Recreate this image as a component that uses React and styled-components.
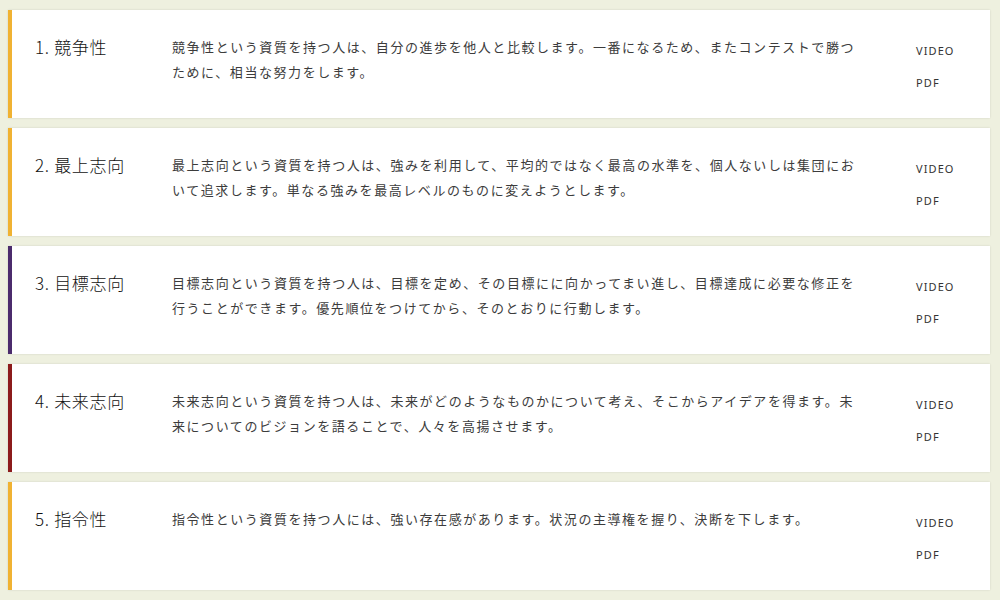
import React from 'react';
import styled, { createGlobalStyle } from 'styled-components';

const GlobalStyle = createGlobalStyle`
  html, body {
    margin: 0;
    padding: 0;
    background: #eef0df;
  }
  body {
    font-family: "Noto Sans CJK JP", "Noto Sans", sans-serif;
    color: #333;
  }
`

const List = styled.ul`
  list-style: none;
  margin: 0;
  padding: 10px 10px 10px 8px;
  display: flex;
  flex-direction: column;
  gap: 10px;
`

const Card = styled.li`
  display: grid;
  grid-template-columns: 137px 690px 1fr;
  box-sizing: border-box;
  height: 108px;
  padding: 24px 0 0 23px;
  background: #fff;
  border-left: 4px solid ${props => props.color};
  box-shadow: 0 0 2px rgba(0, 0, 0, 0.12);
`

const Title = styled.h3`
  margin: 0;
  font-size: 17px;
  font-weight: 300;
  line-height: 25px;
  letter-spacing: 0.04em;
  color: #111;
`

const Description = styled.p`
  margin: 0;
  font-size: 13px;
  font-weight: 400;
  line-height: 25px;
  letter-spacing: 0.12em;
  color: #3c3c3c;
`

const Links = styled.div`
  display: flex;
  flex-direction: column;
  padding-left: 54px;
  padding-top: 1px;
  a {
    font-family: "Noto Sans", sans-serif;
    font-size: 11px;
    font-weight: 400;
    line-height: 32px;
    letter-spacing: 0.1em;
    color: #333;
    text-decoration: none;
  }
`

const ORANGE = '#f0b232'
const PURPLE = '#4b2b6c'
const RED = '#8c1b1b'

const themes = [
  {
    title: '1. 競争性',
    color: ORANGE,
    text: '競争性という資質を持つ人は、自分の進歩を他人と比較します。一番になるため、またコンテストで勝つために、相当な努力をします。',
  },
  {
    title: '2. 最上志向',
    color: ORANGE,
    text: '最上志向という資質を持つ人は、強みを利用して、平均的ではなく最高の水準を、個人ないしは集団において追求します。単なる強みを最高レベルのものに変えようとします。',
  },
  {
    title: '3. 目標志向',
    color: PURPLE,
    text: '目標志向という資質を持つ人は、目標を定め、その目標にに向かってまい進し、目標達成に必要な修正を行うことができます。優先順位をつけてから、そのとおりに行動します。',
  },
  {
    title: '4. 未来志向',
    color: RED,
    text: '未来志向という資質を持つ人は、未来がどのようなものかについて考え、そこからアイデアを得ます。未来についてのビジョンを語ることで、人々を高揚させます。',
  },
  {
    title: '5. 指令性',
    color: ORANGE,
    text: '指令性という資質を持つ人には、強い存在感があります。状況の主導権を握り、決断を下します。',
  },
]

const App = () => {
  return (
    <>
      <GlobalStyle />
      <List>
        {themes.map(t => (
          <Card key={t.title} color={t.color}>
            <Title>{t.title}</Title>
            <Description>{t.text}</Description>
            <Links>
              <a href="#">VIDEO</a>
              <a href="#">PDF</a>
            </Links>
          </Card>
        ))}
      </List>
    </>
  );
}

export default App;
